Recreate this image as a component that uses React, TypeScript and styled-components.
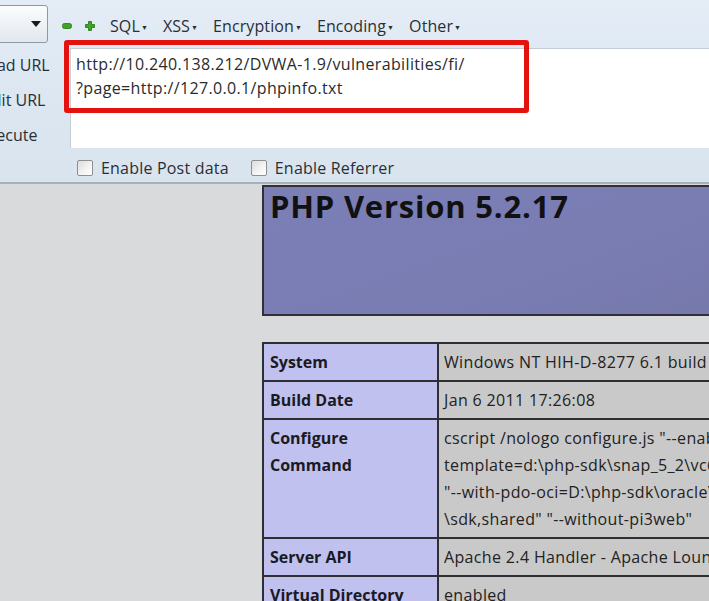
import React from "react";
import styled, { createGlobalStyle } from "styled-components";

const Global = createGlobalStyle`
  html, body { margin: 0; padding: 0; }
  body {
    background: #d9dadc;
    font-family: "Open Sans", "Noto Sans", sans-serif;
    color: #222;
    overflow: hidden;
    width: 709px;
    height: 601px;
  }
`;

const Page = styled.div`
  width: 709px;
  height: 601px;
  overflow: hidden;
  position: relative;
`;

const Bar = styled.div`
  display: grid;
  grid-template-columns: 70px 1fr;
  grid-template-rows: 48px 100px 34px;
  height: 182px;
  background: linear-gradient(180deg, #e4edf6 0%, #dbe6f1 60%, #d9e4ef 100%);
  border-bottom: 2px solid #a4b1bf;
  position: relative;
`;

const SelectCell = styled.div`
  display: flex;
  align-items: flex-start;
  padding-top: 5px;
`;

const Select = styled.div`
  width: 53px;
  height: 38px;
  margin-left: -5px;
  border: 1px solid #8d99a6;
  border-radius: 3px;
  background: linear-gradient(180deg, #fbfcfd 0%, #eef2f6 50%, #e1e7ee 100%);
  display: flex;
  align-items: center;
  justify-content: flex-end;
  padding-right: 6px;
  box-sizing: border-box;
`;

const MenuRow = styled.div`
  display: flex;
  align-items: center;
  padding-top: 3px;
  font-size: 16px;
  color: #2a2f36;
`;

const PmIcons = styled.div`
  display: flex;
  align-items: center;
  gap: 13px;
  margin-left: -8px;
  margin-right: 15px;
`;

const MenuItem = styled.span`
  margin-right: 15px;
  display: inline-flex;
  align-items: center;
  letter-spacing: 0.1px;
`;

const Caret = styled.span`
  font-size: 7px;
  margin-left: 1px;
  margin-top: 3px;
`;

const Labels = styled.div`
  display: flex;
  flex-direction: column;
  overflow: hidden;
`;

const Label = styled.div<{ $first?: boolean }>`
  flex-shrink: 0;
  height: 35px;
  display: flex;
  align-items: center;
  margin-left: -21px;
  font-size: 16px;
  white-space: nowrap;
  color: #2a2f36;
  margin-top: ${(p) => (p.$first ? "-1px" : "0")};
`;

const UrlArea = styled.div`
  background: #fff;
  border-top: 1px solid #c5ccd4;
  border-left: 1px solid #c5ccd4;
  padding: 3px 0 0 5px;
  font-size: 16px;
  line-height: 24px;
  color: #2b2b2b;
  white-space: nowrap;
  letter-spacing: 0.35px;
`;

const Highlight = styled.div`
  position: absolute;
  left: 64px;
  top: 40px;
  width: 465px;
  height: 73px;
  border: 5px solid #e4120e;
  border-radius: 3px;
  box-sizing: border-box;
  pointer-events: none;
`;

const Options = styled.div`
  grid-column: 2;
  display: flex;
  align-items: center;
  padding-left: 7px;
  padding-top: 5px;
  font-size: 16px;
  color: #2a2f36;
`;

const Check = styled.span`
  width: 14px;
  height: 14px;
  border: 1px solid #8e8f8f;
  background: linear-gradient(135deg, #dcdcdc 0%, #f4f4f4 60%, #fff 100%);
  border-radius: 2px;
  margin-right: 8px;
  display: inline-block;
`;

const OptionItem = styled.label`
  display: inline-flex;
  align-items: center;
  margin-right: 22px;
  letter-spacing: 0.2px;
`;

const Content = styled.div`
  padding-left: 262px;
  padding-top: 1px;
  width: 640px;
`;

const Header = styled.div`
  height: 119px;
  border: 2px solid #303036;
  background: linear-gradient(160deg, #7b7fb6 0%, #7a7db2 50%, #7476a8 100%);
  padding: 1px 6px 7px;
`;

const Title = styled.h1`
  margin: 0;
  font-family: "Open Sans", sans-serif;
  font-weight: 700;
  font-size: 31px;
  line-height: 36px;
  color: #111;
  letter-spacing: 0.8px;
`;

const Table = styled.table`
  margin-top: 26px;
  border-collapse: collapse;
  table-layout: fixed;
  border: 2px solid #2e2e34;
  width: 100%;
  font-size: 16px;
`;

const KeyCol = styled.col`
  width: 175px;
`;

const KeyCell = styled.td`
  background: #c0c1ee;
  border: 2px solid #2e2e34;
  font-weight: 700;
  vertical-align: top;
  padding: 5px 4px 4px 6px;
  line-height: 27px;
  color: #1a1a22;
`;

const ValueCell = styled.td`
  background: #c9c9c9;
  border: 2px solid #2e2e34;
  vertical-align: top;
  padding: 5px 6px 4px 5px;
  line-height: 27px;
  color: #222;
  white-space: nowrap;
  overflow: hidden;
  letter-spacing: 0.35px;
`;

const DropArrow = () => (
  <svg width="10" height="6" viewBox="0 0 10 6">
    <path d="M0 0 L10 0 L5 6 Z" fill="#1a1a1a" />
  </svg>
);

const MinusIcon = () => (
  <svg width="10" height="6" viewBox="0 0 10 6">
    <rect x="0.5" y="0.5" width="9" height="5" rx="2" fill="#3fa22b" stroke="#2e8a1f" />
  </svg>
);

const PlusIcon = () => (
  <svg width="10" height="10" viewBox="0 0 10 10">
    <path d="M3.5 0.5 H6.5 V3.5 H9.5 V6.5 H6.5 V9.5 H3.5 V6.5 H0.5 V3.5 H3.5 Z" fill="#3fa22b" stroke="#2e8a1f" strokeLinejoin="round" />
  </svg>
);

const menus = ["SQL", "XSS", "Encryption", "Encoding", "Other"];

const rows: { key: React.ReactNode; value: React.ReactNode }[] = [
  { key: "System", value: "Windows NT HIH-D-8277 6.1 build 7601" },
  { key: "Build Date", value: "Jan 6 2011 17:26:08" },
  {
    key: (
      <>
        Configure
        <br />
        Command
      </>
    ),
    value: (
      <>
        cscript /nologo configure.js "--enable-snapshot-build" "--enable-debug-pack" "--with-snapshot-
        <br />
        template=d:\php-sdk\snap_5_2\vc6\x86\template" "--with-php-build=d:\php-sdk\snap_5_2\vc6\x86\php_build"
        <br />
        "--with-pdo-oci=D:\php-sdk\oracle\instantclient10\sdk,shared" "--with-oci8=D:\php-sdk\oracle\instantclient10
        <br />
        \sdk,shared" "--without-pi3web"
      </>
    ),
  },
  { key: "Server API", value: "Apache 2.4 Handler - Apache Lounge" },
  {
    key: (
      <>
        Virtual Directory
        <br />
        Support
      </>
    ),
    value: "enabled",
  },
];

export default function App() {
  return (
    <Page>
      <Global />
      <Bar>
        <SelectCell>
          <Select>
            <DropArrow />
          </Select>
        </SelectCell>
        <MenuRow>
          <PmIcons>
            <MinusIcon />
            <PlusIcon />
          </PmIcons>
          {menus.map((m) => (
            <MenuItem key={m}>
              {m}
              <Caret>▼</Caret>
            </MenuItem>
          ))}
        </MenuRow>
        <Labels>
          <Label $first>Load URL</Label>
          <Label>Split URL</Label>
          <Label>Execute</Label>
        </Labels>
        <UrlArea>
          http://10.240.138.212/DVWA-1.9/vulnerabilities/fi/
          <br />
          ?page=http://127.0.0.1/phpinfo.txt
        </UrlArea>
        <Options>
          <OptionItem>
            <Check />
            Enable Post data
          </OptionItem>
          <OptionItem>
            <Check />
            Enable Referrer
          </OptionItem>
        </Options>
        <Highlight />
      </Bar>
      <Content>
        <Header>
          <Title>PHP Version 5.2.17</Title>
        </Header>
        <Table>
          <colgroup>
            <KeyCol />
            <col />
          </colgroup>
          <tbody>
            {rows.map((r, i) => (
              <tr key={i}>
                <KeyCell>{r.key}</KeyCell>
                <ValueCell>{r.value}</ValueCell>
              </tr>
            ))}
          </tbody>
        </Table>
      </Content>
    </Page>
  );
}
